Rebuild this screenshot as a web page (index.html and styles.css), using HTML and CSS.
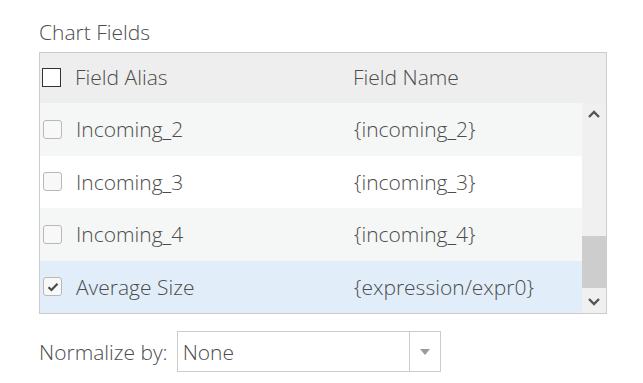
FILE: index.html
```html
<!DOCTYPE html>
<html lang="en">
<head>
  <meta charset="UTF-8">
  <title>Chart Fields</title>
  <link rel="stylesheet" href="styles.css">
</head>
<body>
  <div class="panel">
    <!-- caption -->
    <div class="caption">Chart Fields</div>

    <!-- field table -->
    <div class="grid">
      <div class="grid-head">
        <span class="cb cb-head"></span>
        <span class="col-alias">Field Alias</span>
        <span class="col-name">Field Name</span>
      </div>
      <div class="grid-body">
        <div class="rows">
          <div class="row row-alt">
            <span class="cb"></span>
            <span class="col-alias">Incoming_2</span>
            <span class="col-name">{incoming_2}</span>
          </div>
          <div class="row">
            <span class="cb"></span>
            <span class="col-alias">Incoming_3</span>
            <span class="col-name">{incoming_3}</span>
          </div>
          <div class="row row-alt">
            <span class="cb"></span>
            <span class="col-alias">Incoming_4</span>
            <span class="col-name">{incoming_4}</span>
          </div>
          <div class="row row-selected">
            <span class="cb cb-checked">
              <svg width="12" height="10" viewBox="0 0 12 10"><path d="M1.5 5.2 L4.5 8 L10.5 1.8" fill="none" stroke="#4a4a4a" stroke-width="2.2"/></svg>
            </span>
            <span class="col-alias">Average Size</span>
            <span class="col-name">{expression/expr0}</span>
          </div>
        </div>

        <!-- scrollbar -->
        <div class="scrollbar">
          <div class="sb-btn">
            <svg width="12" height="8" viewBox="0 0 12 8"><path d="M1 7 L6 2 L11 7" fill="none" stroke="#555" stroke-width="2.4"/></svg>
          </div>
          <div class="sb-track"><div class="sb-thumb"></div></div>
          <div class="sb-btn">
            <svg width="12" height="8" viewBox="0 0 12 8"><path d="M1 1 L6 6 L11 1" fill="none" stroke="#555" stroke-width="2.4"/></svg>
          </div>
        </div>
      </div>
    </div>

    <!-- normalize select -->
    <div class="normalize">
      <span class="normalize-label">Normalize by:</span>
      <div class="select">
        <span class="select-value">None</span>
        <span class="select-arrow"><span class="caret"></span></span>
      </div>
    </div>
  </div>
</body>
</html>
```

FILE: styles.css
```css
html, body {
  margin: 0;
  padding: 0;
  background: #ffffff;
  color: #4c4c4c;
  font-family: "Open Sans", "Lato", sans-serif;
  font-weight: 300;
  font-size: 21px;
}

.panel {
  padding: 18px 0 0 39px;
  width: 568px;
}

.caption {
  line-height: 28px;
  height: 34px;
}

/* table */
.grid {
  border: 1px solid #cccccc;
  width: 566px;
}

.grid-head {
  display: flex;
  align-items: center;
  height: 50px;
  padding-bottom: 2px;
  box-sizing: border-box;
  background: #eeeeee;
}

.grid-body {
  display: flex;
  height: 210px;
}

.rows {
  width: 542px;
}

.row {
  display: flex;
  align-items: center;
  height: 52.5px;
  background: #ffffff;
}
.row-alt {
  background: #f5f7f7;
}
.row-selected {
  background: #e1eefa;
}

.col-alias {
  width: 278px;
}

.col-name {
  flex: 1;
}

/* checkboxes */
.cb {
  box-sizing: border-box;
  width: 19px;
  height: 19px;
  margin: 0 14px 0 3px;
  border: 1px solid #b8b8b8;
  border-radius: 3px;
  background: #f8f8f8;
  display: flex;
  align-items: center;
  justify-content: center;
}
.cb-head {
  margin-left: 2px;
  border: 1px solid #333333;
  border-radius: 0;
  background: #ffffff;
}

/* scrollbar */
.scrollbar {
  width: 24px;
  background: #f0f0f0;
  display: flex;
  flex-direction: column;
}
.sb-btn {
  height: 22px;
  display: flex;
  align-items: center;
  justify-content: center;
}
.sb-track {
  flex: 1;
  padding-top: 111px;
}
.sb-thumb {
  height: 52px;
  background: #cdcdcd;
}

/* normalize */
.normalize {
  display: flex;
  align-items: center;
  margin-top: 17px;
}
.normalize-label {
  margin-right: 9px;
}
.select {
  box-sizing: border-box;
  width: 264px;
  height: 41px;
  border: 1px solid #cccccc;
  display: flex;
  align-items: center;
}
.select-value {
  flex: 1;
  padding-left: 5px;
}
.select-arrow {
  width: 30px;
  height: 100%;
  border-left: 1px solid #cccccc;
  display: flex;
  align-items: center;
  justify-content: center;
}
.caret {
  width: 0;
  height: 0;
  border-left: 5px solid transparent;
  border-right: 5px solid transparent;
  border-top: 6px solid #9a9a9a;
}
```
